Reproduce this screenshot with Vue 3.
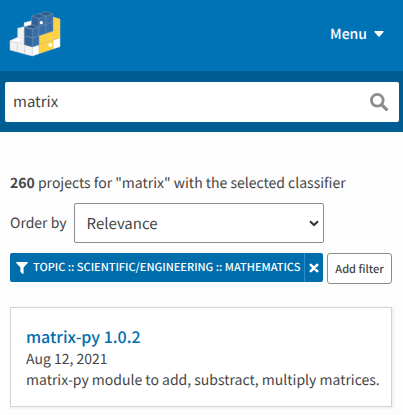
<script setup>
import { ref } from 'vue'

const query = ref('matrix')
const order = ref('Relevance')
const filters = ref(['Topic :: Scientific/Engineering :: Mathematics'])
const projects = [
  {
    name: 'matrix-py',
    version: '1.0.2',
    date: 'Aug 12, 2021',
    summary: 'matrix-py module to add, substract, multiply matrices.',
  },
]

function removeFilter(filter) {
  filters.value = filters.value.filter((f) => f !== filter)
}
</script>

<template>
  <div class="page">
    <header class="site-header">
      <a class="logo" href="#" aria-label="PyPI">
        <svg viewBox="0 0 156 141" width="52" height="47" aria-hidden="true">
          <g stroke="#d6d6d6" stroke-width="1.5" stroke-linejoin="round">
            <g fill="#f2f2f2">
              <path d="M46 38L68 44V104L46 108Z" />
              <path d="M26 55L48 61V116L26 108Z" />
              <path d="M3 92L25 98V126L3 120Z" />
              <path d="M25 98L47 104V132L25 126Z" />
              <path d="M47 104L70 110V138L47 132Z" />
            </g>
            <g fill="#fff">
              <path d="M46 38L68 32V44L90 50L70 58L46 52Z" />
              <path d="M26 55L46 50L68 56L46 63Z" />
              <path d="M3 92L26 82L48 88L25 98Z" />
              <path d="M70 111L90 104V131L70 138Z" />
              <path d="M132 90L153 83V110L132 117Z" />
            </g>
          </g>
          <g stroke="#e3c877" stroke-width="1.5" stroke-linejoin="round">
            <g fill="#ffd242">
              <path d="M131 21L153 28V56L132 63Z" />
              <path d="M90 77L111 70V97L90 104Z" />
              <path d="M111 70L132 63V90L111 97Z" />
              <path d="M132 63L153 56V83L132 90Z" />
              <path d="M90 104L111 97V124L90 131Z" />
              <path d="M111 97L132 90V117L111 124Z" />
            </g>
            <path fill="#ffd242" d="M131 21L153 28L132 36Z" />
          </g>
          <g stroke="#7390ae" stroke-width="1.5" stroke-linejoin="round">
            <g fill="#2f6299">
              <path d="M46 51L70 58V84L46 77Z" />
              <path d="M46 77L70 84V111L46 104Z" />
              <path d="M68 18L90 26V53L68 45Z" />
            </g>
            <g fill="#3770a8">
              <path d="M70 57L90 50V77L70 84Z" />
              <path d="M70 84L90 77V104L70 111Z" />
              <path d="M90 50L111 43V70L90 77Z" />
              <path d="M111 43L132 36V63L111 70Z" />
              <path d="M90 25L111 18V43L90 50Z" />
              <path d="M111 18L132 11V36L111 43Z" />
            </g>
            <g fill="#2d5c8c">
              <path d="M46 51L68 44L90 50L70 57Z" />
              <path d="M68 18L89 11L111 18L90 25Z" />
              <path d="M89 11L111 5L132 11L111 18Z" />
            </g>
          </g>
          <circle cx="97" cy="38" r="5" fill="#fff" />
          <circle cx="124" cy="105" r="6" fill="#fff" />
        </svg>
      </a>
      <button class="menu" type="button">
        Menu
        <svg viewBox="0 0 10 6" width="10" height="6" aria-hidden="true">
          <path d="M1 0H9Q10 0 9.5 1L5.6 5.5Q5 6 4.4 5.5L.5 1Q0 0 1 0Z" fill="#fff" />
        </svg>
      </button>
    </header>

    <form class="search" role="search" @submit.prevent>
      <div class="search-box">
        <input v-model="query" type="text" aria-label="Search PyPI" />
        <button type="submit" aria-label="Search">
          <svg viewBox="0 0 18 18" width="18" height="18" aria-hidden="true">
            <circle cx="7.3" cy="7.3" r="5.9" fill="none" stroke="#8c8c8c" stroke-width="2.8" />
            <path d="M11.8 11.8L16.4 16.4" stroke="#8c8c8c" stroke-width="3.2" stroke-linecap="round" />
          </svg>
        </button>
      </div>
    </form>

    <main class="content">
      <p class="count"><strong>260</strong> projects for "matrix" with the selected classifier</p>

      <div class="order">
        <label for="order">Order by</label>
        <span class="select">
          <select id="order" v-model="order">
            <option>Relevance</option>
            <option>Date last updated</option>
            <option>Trending</option>
          </select>
          <svg viewBox="0 0 10 7" width="10" height="7" aria-hidden="true">
            <path d="M1 1.2L5 5L9 1.2" fill="none" stroke="#333" stroke-width="2" />
          </svg>
        </span>
      </div>

      <div class="filters">
        <div v-for="filter in filters" :key="filter" class="filter">
          <span class="filter-name">
            <svg viewBox="0 0 12 12" width="12" height="12" aria-hidden="true">
              <path d="M.6 0H11.4Q12.3 .3 11.7 1.1L7.6 5.4V11.3Q7.4 12.2 6.6 11.8L4.7 10.2Q4.4 10 4.4 9.5V5.4L.3 1.1Q-.3 .3 .6 0Z" fill="#fff" />
            </svg>
            {{ filter }}
          </span>
          <button type="button" aria-label="Remove filter" @click="removeFilter(filter)">
            <svg viewBox="0 0 10 10" width="10" height="10" aria-hidden="true">
              <path d="M1.8 1.8L8.2 8.2M8.2 1.8L1.8 8.2" stroke="#fff" stroke-width="2.6" stroke-linecap="round" />
            </svg>
          </button>
        </div>
        <button class="add-filter" type="button">Add filter</button>
      </div>

      <a v-for="project in projects" :key="project.name" class="card" href="#">
        <h3>{{ project.name }} {{ project.version }}</h3>
        <time>{{ project.date }}</time>
        <p>{{ project.summary }}</p>
      </a>
    </main>
  </div>
</template>

<style>
body {
  background: #fdfdfd;
}
</style>

<style scoped>
.page,
.page button,
.page input,
.page select {
  font-family: "Noto Sans CJK SC", "Noto Sans", sans-serif;
  color: #464646;
  text-rendering: geometricPrecision;
}

.page {
  font-size: 14px;
  line-height: 21px;
}

.page * {
  box-sizing: border-box;
}

.page button {
  border: 0;
  padding: 0;
  background: none;
  cursor: pointer;
}

.page p,
.page h3 {
  margin: 0;
}

.page svg {
  display: block;
}

.site-header {
  display: flex;
  align-items: center;
  justify-content: space-between;
  height: 71px;
  padding: 0 19px 4px 9px;
  background: #0073b7;
}

.site-header .menu {
  display: flex;
  align-items: center;
  gap: 7px;
  font-size: 14px;
  font-weight: 500;
  color: #fff;
}

.search {
  padding: 11px 4px 10px 5px;
  background: #005d94;
}

.search-box {
  display: flex;
  align-items: center;
  height: 40px;
  padding: 0 11px 0 8px;
  border-radius: 2px;
  background: #fff;
}

.search-box input {
  flex: 1;
  min-width: 0;
  height: 40px;
  padding: 0 0 2px;
  border: 0;
  outline: 0;
  background: none;
  font-size: 15px;
}

.content {
  padding: 41px 11px 10px 10px;
}

.order {
  display: flex;
  align-items: center;
  gap: 7px;
  margin-top: 9px;
}

.select {
  position: relative;
  flex: 0 1 250px;
}

.order select {
  display: block;
  width: 100%;
  height: 40px;
  padding: 0 30px 0 12px;
  border: 1px solid #8c8c8c;
  border-radius: 2px;
  background: #fff;
  appearance: none;
  font-size: 15px;
}

.select svg {
  position: absolute;
  top: 17px;
  right: 5px;
  pointer-events: none;
}

.filters {
  display: flex;
  align-items: flex-start;
  gap: 4px;
  margin-top: 10px;
}

.filter {
  display: flex;
  height: 29px;
  border-radius: 2px;
  background: #006dad;
}

.filter-name {
  display: flex;
  align-items: center;
  gap: 5px;
  padding: 0 4px 0 6px;
  font-size: 11px;
  font-weight: 500;
  color: #fff;
  text-transform: uppercase;
  white-space: nowrap;
}

.filter button {
  display: flex;
  align-items: center;
  justify-content: center;
  width: 19px;
  border-left: 1px solid #2f8cc4;
}

.filters .add-filter {
  height: 31px;
  padding: 0 7px;
  border: 1px solid #8c8c8c;
  border-radius: 3px;
  background: #fff;
  font-size: 11px;
  font-weight: 500;
  white-space: nowrap;
}

.card {
  display: block;
  margin-top: 23px;
  padding: 15px 5px 15px 15px;
  border: 1px solid #d3d3d3;
  background: #fff;
  box-shadow: 1px 1px 2px 1px rgba(0, 0, 0, 0.05);
  color: #464646;
  text-decoration: none;
}

.card h3 {
  font-size: 16px;
  line-height: 26px;
  font-weight: 500;
  color: #006dad;
}

.card time {
  display: block;
}
</style>
